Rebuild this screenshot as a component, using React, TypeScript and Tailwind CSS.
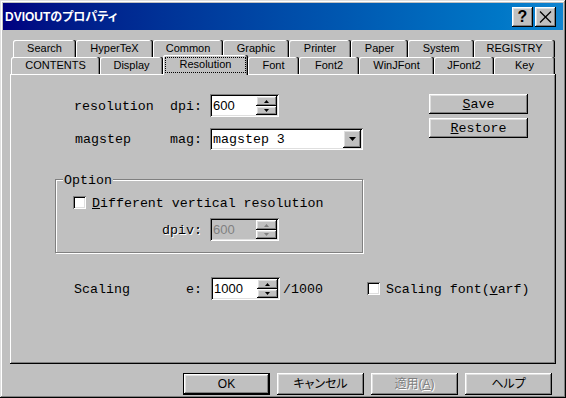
import React from "react";

const RAISED =
  "bg-[#c0c0c0] shadow-[inset_-1px_-1px_0_#000,inset_1px_1px_0_#fff,inset_-2px_-2px_0_#808080,inset_2px_2px_0_#dfdfdf]";
const SUNKEN =
  "shadow-[inset_1px_1px_0_#808080,inset_-1px_-1px_0_#fff,inset_2px_2px_0_#000,inset_-2px_-2px_0_#dfdfdf]";
const MONO = "font-['Liberation_Mono',monospace] text-[13.3px] leading-none text-black pt-[2px]";
const SANS = "font-['Liberation_Sans',Arial,sans-serif]";
const JP =
  "font-['Liberation_Sans','Noto_Sans_CJK_JP',sans-serif] [font-feature-settings:'palt']";
const DIS = "text-[#808080] [text-shadow:1px_1px_0_#ffffff]";

const row1 = [
  { l: "Search", w: "w-[63px]" },
  { l: "HyperTeX", w: "w-[77px]" },
  { l: "Common", w: "w-[70px]" },
  { l: "Graphic", w: "w-[66px]" },
  { l: "Printer", w: "w-[62px]" },
  { l: "Paper", w: "w-[57px]" },
  { l: "System", w: "w-[66px]" },
  { l: "REGISTRY", w: "w-[81px]" },
];
const row2 = [
  { l: "CONTENTS", w: "w-[89px]" },
  { l: "Display", w: "w-[63px]" },
  { l: "Resolution", w: "w-[85px]", sel: true },
  { l: "Font", w: "w-[51px]" },
  { l: "Font2", w: "w-[60px]" },
  { l: "WinJFont", w: "w-[75px]" },
  { l: "JFont2", w: "w-[60px]" },
  { l: "Key", w: "w-[61px]" },
];

function Tab({ l, w, sel }: { l: string; w: string; sel?: boolean }) {
  if (sel) {
    return (
      <div
        className={`${w} relative top-[1px] z-10 h-[20px] shrink-0 bg-[#c0c0c0] rounded-t-[2px] flex items-center justify-center pb-[2px] shadow-[inset_-1px_0_0_#000,inset_-2px_0_0_#808080,inset_1px_1px_0_#fff] ${SANS} text-[11px] text-black`}
      >
        <div className="absolute left-[2px] right-[2px] top-[2px] bottom-[2px] border border-dotted border-black" />
        <span className="relative">{l}</span>
      </div>
    );
  }
  return (
    <div
      className={`${w} h-[17px] shrink-0 bg-[#c0c0c0] rounded-t-[2px] flex items-center justify-center shadow-[inset_-1px_0_0_#000,inset_-2px_0_0_#808080,inset_1px_1px_0_#fff] ${SANS} text-[11px] text-black`}
    >
      {l}
    </div>
  );
}

function Arrow({ up, dis }: { up?: boolean; dis?: boolean }) {
  return (
    <svg width="5" height="3" viewBox="0 0 5 3">
      <polygon
        points={up ? "2.5,0 5,3 0,3" : "0,0 5,0 2.5,3"}
        fill={dis ? "#808080" : "#000"}
      />
    </svg>
  );
}

function SpinBox({
  value,
  dis,
  extra,
}: {
  value: string;
  dis?: boolean;
  extra: string;
}) {
  return (
    <div
      className={`${extra} w-[69px] h-[23px] ${dis ? "bg-[#c0c0c0]" : "bg-white"} ${SUNKEN} p-[2px] flex`}
    >
      <div
        className={`flex-1 flex items-center pl-[1px] ${SANS} text-[13px] leading-none ${dis ? "text-[#808080]" : "text-black"}`}
      >
        {value}
      </div>
      <div className="w-[21px] flex flex-col">
        <div className={`h-[10px] ${RAISED} flex items-center justify-center`}>
          <Arrow up dis={dis} />
        </div>
        <div className={`h-[9px] ${RAISED} flex items-center justify-center`}>
          <Arrow dis={dis} />
        </div>
      </div>
    </div>
  );
}

function CheckBox() {
  return <div className={`w-[13px] h-[13px] bg-white ${SUNKEN} shrink-0`} />;
}

function BottomButton({
  children,
  def,
}: {
  children: React.ReactNode;
  def?: boolean;
}) {
  if (def) {
    return (
      <div className="w-[87px] h-[22px] border border-black flex">
        <div
          className={`flex-1 ${RAISED} flex items-center justify-center ${JP} text-[12px] text-black`}
        >
          {children}
        </div>
      </div>
    );
  }
  return (
    <div
      className={`w-[87px] h-[22px] ${RAISED} flex items-center justify-center ${JP} text-[12px] text-black`}
    >
      {children}
    </div>
  );
}

export default function App() {
  return (
    <div className="w-[566px] h-[398px] bg-[#c0c0c0] p-[3px] flex flex-col shadow-[inset_-1px_-1px_0_#000,inset_1px_1px_0_#dfdfdf,inset_-2px_-2px_0_#808080,inset_2px_2px_0_#fff]">
      {/* title bar */}
      <div className="h-[27px] shrink-0 flex items-center pl-[2px] pr-[7px] bg-linear-to-r from-[#000080] to-[#1084d0]">
        <span className={`${JP} font-bold text-[12px] text-white leading-none`}>
          DVIOUTのプロパティ
        </span>
        <div className="ml-auto flex gap-[2px]">
          <div
            className={`w-[21px] h-[20px] ${RAISED} flex items-center justify-center ${SANS} font-bold text-[16px] leading-none text-black`}
          >
            ?
          </div>
          <div className={`w-[21px] h-[20px] ${RAISED} flex items-center justify-center`}>
            <svg width="13" height="12" viewBox="0 0 13 12">
              <line x1="1" y1="0.5" x2="12" y2="11.5" stroke="#000" strokeWidth="1.3" />
              <line x1="12" y1="0.5" x2="1" y2="11.5" stroke="#000" strokeWidth="1.3" />
            </svg>
          </div>
        </div>
      </div>

      {/* tabs */}
      <div className="mt-[10px] ml-[7px] w-[546px] flex flex-col">
        <div className="flex h-[17px] pl-[3px]">
          {row1.map((t) => (
            <Tab key={t.l} l={t.l} w={t.w} />
          ))}
        </div>
        <div className="flex items-end h-[17px] pl-[1px]">
          {row2.map((t) => (
            <Tab key={t.l} l={t.l} w={t.w} sel={t.sel} />
          ))}
        </div>
      </div>

      {/* panel */}
      <div className="ml-[7px] w-[546px] h-[290px] shrink-0 flex flex-col shadow-[inset_-1px_-1px_0_#000,inset_1px_1px_0_#fff,inset_-2px_-2px_0_#808080]">
        <div className="flex mt-[20px]">
          <div className="flex flex-col">
            <div className="flex items-center h-[23px] pl-[64px]">
              <span className={`${MONO} w-[96px]`}>resolution</span>
              <span className={`${MONO} w-[32px] text-right`}>dpi:</span>
              <SpinBox value="600" extra="ml-[8px]" />
            </div>
            <div className="flex items-center h-[22px] mt-[11px] pl-[64px]">
              <span className={`${MONO} w-[96px] pl-[1px]`}>magstep</span>
              <span className={`${MONO} w-[32px] text-right`}>mag:</span>
              <div className={`ml-[8px] w-[153px] h-[22px] bg-white ${SUNKEN} p-[2px] flex`}>
                <div className={`flex-1 flex items-center pl-[1px] ${MONO}`}>magstep 3</div>
                <div className={`w-[18px] h-[18px] ${RAISED} flex items-center justify-center`}>
                  <svg width="7" height="4" viewBox="0 0 7 4">
                    <polygon points="0,0 7,0 3.5,4" fill="#000" />
                  </svg>
                </div>
              </div>
            </div>
          </div>
          <div className="ml-auto mr-[28px] flex flex-col gap-[4px]">
            <div className={`w-[99px] h-[20px] ${RAISED} flex items-center justify-center ${MONO}`}>
              <span>
                <u>S</u>ave
              </span>
            </div>
            <div className={`w-[99px] h-[20px] ${RAISED} flex items-center justify-center ${MONO}`}>
              <span>
                <u>R</u>estore
              </span>
            </div>
          </div>
        </div>

        {/* Option group */}
        <div className="relative mt-[29px] ml-[45px] w-[308px] h-[74px] border border-[#808080] shadow-[1px_1px_0_#fff,inset_1px_1px_0_#fff] flex flex-col pt-[16px] pl-[17px]">
          <span className={`absolute left-[7px] -top-[8px] px-[1px] bg-[#c0c0c0] ${MONO}`}>
            Option
          </span>
          <div className="flex items-center h-[13px]">
            <CheckBox />
            <span className={`${MONO} ml-[6px]`}>
              <u>D</u>ifferent vertical resolution
            </span>
          </div>
          <div className="flex items-center h-[23px] mt-[9px]">
            <span className={`${MONO} ${DIS} w-[129px] text-right`}>dpiv:</span>
            <SpinBox value="600" dis extra="ml-[8px]" />
          </div>
        </div>

        {/* Scaling row */}
        <div className="flex items-center h-[23px] mt-[24px] pl-[64px]">
          <span className={`${MONO} w-[96px]`}>Scaling</span>
          <span className={`${MONO} w-[32px] text-right`}>e:</span>
          <SpinBox value="1000" extra="ml-[9px]" />
          <span className={`${MONO} ml-[3px]`}>/1000</span>
          <div className="ml-[44px] flex items-center">
            <CheckBox />
            <span className={`${MONO} ml-[6px]`}>
              Scaling font(<u>v</u>arf)
            </span>
          </div>
        </div>
      </div>

      {/* bottom buttons */}
      <div className="mt-[9px] flex justify-end gap-[7px] pr-[11px]">
        <BottomButton def>OK</BottomButton>
        <BottomButton>キャンセル</BottomButton>
        <BottomButton>
          <span className={DIS}>
            適用(<u>A</u>)
          </span>
        </BottomButton>
        <BottomButton>ヘルプ</BottomButton>
      </div>
    </div>
  );
}
